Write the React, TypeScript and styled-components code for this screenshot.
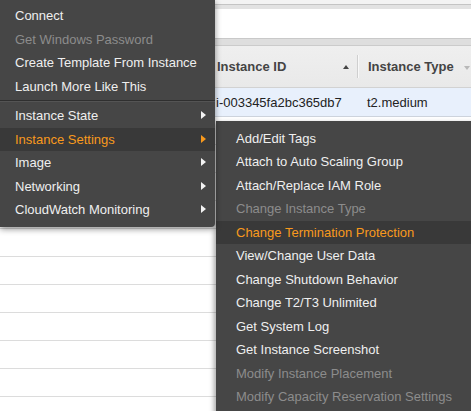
import styled, { createGlobalStyle } from 'styled-components';

const GlobalStyle = createGlobalStyle`
  html, body {
    margin: 0;
    padding: 0;
    background: #fff;
    overflow: hidden;
  }
  body {
    font-family: "Liberation Sans", Arial, Helvetica, sans-serif;
  }
`

type MenuItem = {
  label: string;
  disabled?: boolean;
  active?: boolean;
  submenu?: boolean;
}

const mainItems: (MenuItem | 'sep')[] = [
  {label: 'Connect'},
  {label: 'Get Windows Password', disabled: true},
  {label: 'Create Template From Instance'},
  {label: 'Launch More Like This'},
  'sep',
  {label: 'Instance State', submenu: true},
  {label: 'Instance Settings', submenu: true, active: true},
  {label: 'Image', submenu: true},
  {label: 'Networking', submenu: true},
  {label: 'CloudWatch Monitoring', submenu: true},
]

const settingsItems: MenuItem[] = [
  {label: 'Add/Edit Tags'},
  {label: 'Attach to Auto Scaling Group'},
  {label: 'Attach/Replace IAM Role'},
  {label: 'Change Instance Type', disabled: true},
  {label: 'Change Termination Protection', active: true},
  {label: 'View/Change User Data'},
  {label: 'Change Shutdown Behavior'},
  {label: 'Change T2/T3 Unlimited'},
  {label: 'Get System Log'},
  {label: 'Get Instance Screenshot'},
  {label: 'Modify Instance Placement', disabled: true},
  {label: 'Modify Capacity Reservation Settings', disabled: true},
]

export default function App() {
  return (
    <Page>
      <GlobalStyle />
      <Table>
        <TopStrip />
        <SearchBar />
        <FilterBand />
        <HeaderRow>
          <SpacerCell />
          <HeaderCell $width={140}>
            Instance ID
            <SortUp />
          </HeaderCell>
          <ColDivider />
          <HeaderCell $width={104} $pad={10}>
            Instance Type
            <SortDown />
          </HeaderCell>
        </HeaderRow>
        <DataRow>
          <SpacerCell />
          <DataCell $width={141}>i-003345fa2bc365db7</DataCell>
          <DataCell $width={104} $pad={10}>t2.medium</DataCell>
        </DataRow>
        {Array.from({length: 11}).map((_, i) => <EmptyRow key={i} />)}
      </Table>

      <MainMenu>
        {mainItems.map((item, i) =>
          item === 'sep'
            ? <Separator key={i} />
            : (
              <MainRow key={i} $active={item.active} $disabled={item.disabled}>
                {item.label}
                {item.submenu && <Caret $active={item.active} />}
              </MainRow>
            )
        )}
      </MainMenu>

      <SubMenu>
        {settingsItems.map((item, i) => (
          <SubRow key={i} $active={item.active} $disabled={item.disabled}>
            {item.label}
          </SubRow>
        ))}
      </SubMenu>
    </Page>
  )
}

const Page = styled.div`
  position: relative;
  width: 471px;
  height: 411px;
  overflow: hidden;
  background: #fff;
`

const Table = styled.div`
  display: flex;
  flex-direction: column;
  width: 100%;
`

const TopStrip = styled.div`
  height: 4px;
  background: #f3f3f3;
  border-bottom: 1px solid #c4c4c4;
`

const SearchBar = styled.div`
  height: 29px;
  background: #fff;
  border-top: 4px solid #e2e2e2;
  border-bottom: 1px solid #c9c9c9;
`

const FilterBand = styled.div`
  height: 6px;
  background: #dedede;
  border-bottom: 1px solid #cbcbcb;
`

const HeaderRow = styled.div`
  display: flex;
  align-items: center;
  height: 41px;
  background: linear-gradient(#efefef, #e9e9e9);
  border-bottom: 1px solid #d2d2d2;
`

const SpacerCell = styled.div`
  width: 215px;
  flex-shrink: 0;
`

const HeaderCell = styled.div<{ $width: number; $pad?: number }>`
  position: relative;
  display: flex;
  align-items: center;
  width: ${p => p.$width}px;
  padding-left: ${p => p.$pad ?? 2}px;
  flex-shrink: 0;
  font-size: 13px;
  font-weight: bold;
  color: #444;
  white-space: nowrap;
`

const SortUp = styled.span`
  position: absolute;
  right: 8px;
  top: 50%;
  margin-top: -2px;
  border-left: 3.5px solid transparent;
  border-right: 3.5px solid transparent;
  border-bottom: 4px solid #444;
`

const SortDown = styled.span`
  position: absolute;
  right: 2px;
  top: 50%;
  margin-top: -1px;
  border-left: 3.5px solid transparent;
  border-right: 3.5px solid transparent;
  border-top: 4px solid #b8b8b8;
`

const ColDivider = styled.div`
  width: 1px;
  height: 23px;
  flex-shrink: 0;
  background: #cfcfcf;
  box-shadow: 1px 0 0 #f8f8f8;
`

const DataRow = styled.div`
  display: flex;
  align-items: center;
  height: 28px;
  background: #e8f0fc;
  border-bottom: 1px solid #cdd3dc;
`

const DataCell = styled.div<{ $width: number; $pad?: number }>`
  width: ${p => p.$width}px;
  padding-left: ${p => p.$pad ?? 1}px;
  flex-shrink: 0;
  font-size: 13px;
  color: #222;
  white-space: nowrap;
`

const EmptyRow = styled.div`
  height: 27px;
  border-bottom: 1px solid #dcdcdc;
`

const MainMenu = styled.div`
  position: absolute;
  left: 0;
  top: 0;
  width: 215px;
  padding: 4px 0 5px;
  background: #464646;
  border-bottom-right-radius: 4px;
  box-shadow: 0 2px 6px rgba(0, 0, 0, 0.45);
  z-index: 2;
`

const MainRow = styled.div<{ $active?: boolean; $disabled?: boolean }>`
  position: relative;
  display: flex;
  align-items: center;
  height: 23.5px;
  padding-left: 15px;
  font-size: 13px;
  white-space: nowrap;
  color: ${p => p.$active ? '#f8991d' : p.$disabled ? '#8c8c8c' : '#efefef'};
  background: ${p => p.$active ? '#393939' : 'transparent'};
`

const Caret = styled.span<{ $active?: boolean }>`
  position: absolute;
  right: 9px;
  top: 50%;
  margin-top: -4.5px;
  border-top: 4.5px solid transparent;
  border-bottom: 4.5px solid transparent;
  border-left: 5px solid ${p => p.$active ? '#f8991d' : '#f2f2f2'};
`

const Separator = styled.div`
  height: 0;
  margin: 1.5px 0 2.5px;
  border-top: 1px solid #2f2f2f;
  border-bottom: 1px solid #545454;
`

const SubMenu = styled.div`
  position: absolute;
  left: 216px;
  top: 121px;
  width: 270px;
  height: 300px;
  padding-top: 5.5px;
  background: #464646;
  box-shadow: -2px 2px 5px rgba(0, 0, 0, 0.35);
  z-index: 1;
`

const SubRow = styled.div<{ $active?: boolean; $disabled?: boolean }>`
  display: flex;
  align-items: center;
  height: 23.5px;
  padding-left: 20px;
  font-size: 13px;
  white-space: nowrap;
  color: ${p => p.$active ? '#f8991d' : p.$disabled ? '#8c8c8c' : '#efefef'};
  background: ${p => p.$active ? '#393939' : 'transparent'};
`
